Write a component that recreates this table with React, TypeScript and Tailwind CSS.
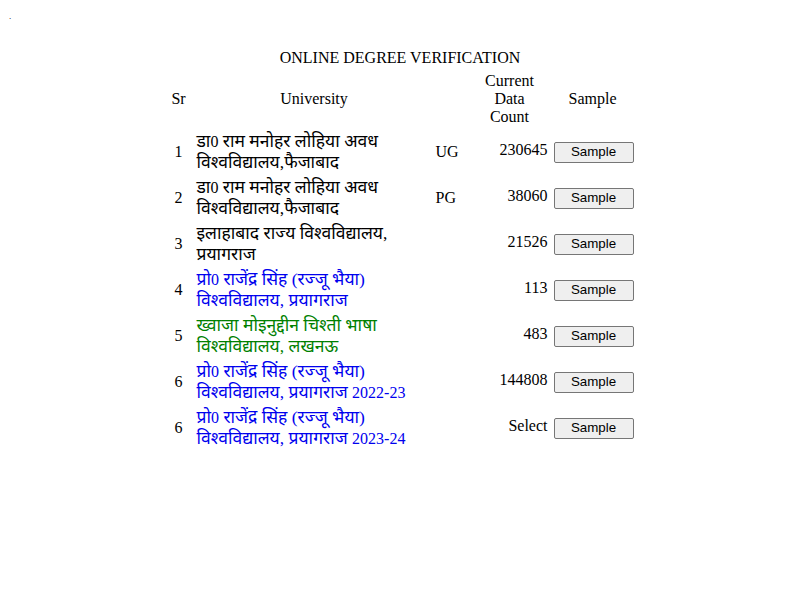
const rows = [
  { sr: "1", lines: ["डा0 राम मनोहर लोहिया अवध", "विश्वविद्यालय,फैजाबाद"], color: "text-black", type: "UG", count: "230645" },
  { sr: "2", lines: ["डा0 राम मनोहर लोहिया अवध", "विश्वविद्यालय,फैजाबाद"], color: "text-black", type: "PG", count: "38060" },
  { sr: "3", lines: ["इलाहाबाद राज्य विश्वविद्यालय,", "प्रयागराज"], color: "text-black", type: "", count: "21526" },
  { sr: "4", lines: ["प्रो0 राजेंद्र सिंह (रज्जू भैया)", "विश्वविद्यालय, प्रयागराज"], color: "text-[#0000ee]", type: "", count: "113" },
  { sr: "5", lines: ["ख्वाजा मोइनुद्दीन चिश्ती भाषा", "विश्वविद्यालय, लखनऊ"], color: "text-[#008000]", type: "", count: "483" },
  { sr: "6", lines: ["प्रो0 राजेंद्र सिंह (रज्जू भैया)", "विश्वविद्यालय, प्रयागराज 2022-23"], color: "text-[#0000ee]", type: "", count: "144808" },
  { sr: "6", lines: ["प्रो0 राजेंद्र सिंह (रज्जू भैया)", "विश्वविद्यालय, प्रयागराज 2023-24"], color: "text-[#0000ee]", type: "", count: "Select" },
];

const cols = "grid grid-cols-[28px_243px_34px_80px_86px]";

// latin digits stay at 16px, devanagari gets a slightly bigger size like the original
function Line({ text }: { text: string }) {
  const parts = text.split(/([0-9][0-9\-]*)/);
  return (
    <>
      {parts.map((p, i) =>
        /^[0-9]/.test(p) ? (
          <span key={i} className="text-[16px]">
            {p}
          </span>
        ) : (
          <span key={i}>{p}</span>
        )
      )}
    </>
  );
}

export default function App() {
  return (
    <div className="w-[800px] h-[600px] bg-white text-black font-['Liberation_Serif','Noto_Sans',serif] text-[16px]">
      {/* stray dot */}
      <div className="h-[49px] pl-[9px] pt-[12px] text-[9px] leading-none">.</div>

      <div className="text-center leading-[18px]">ONLINE DEGREE VERIFICATION</div>

      <div className="w-[471px] mx-auto mt-[5px]">
        {/* header */}
        <div className={`${cols} items-center leading-[18px] text-center`}>
          <div>Sr</div>
          <div>University</div>
          <div></div>
          <div>
            Current
            <br />
            Data
            <br />
            Count
          </div>
          <div>Sample</div>
        </div>

        <div className="mt-[3px]">
          {rows.map((r, i) => (
            <div key={i} className={`${cols} items-center h-[46px]`}>
              <div className="text-center">{r.sr}</div>
              <div className={`pl-1 leading-[21px] text-[17.5px] ${r.color}`}>
                <Line text={r.lines[0]} />
                <br />
                <Line text={r.lines[1]} />
              </div>
              <div>{r.type}</div>
              <div className="text-right pr-[2px] pb-[4px]">{r.count}</div>
              <div className="flex justify-center">
                <button className="w-[80px] h-[21px] ml-[2px] bg-[#efefef] border border-[#767676] rounded-[2px] text-[13.33px] font-['Liberation_Sans',Arial,sans-serif] leading-none">
                  Sample
                </button>
              </div>
            </div>
          ))}
        </div>
      </div>
    </div>
  );
}
